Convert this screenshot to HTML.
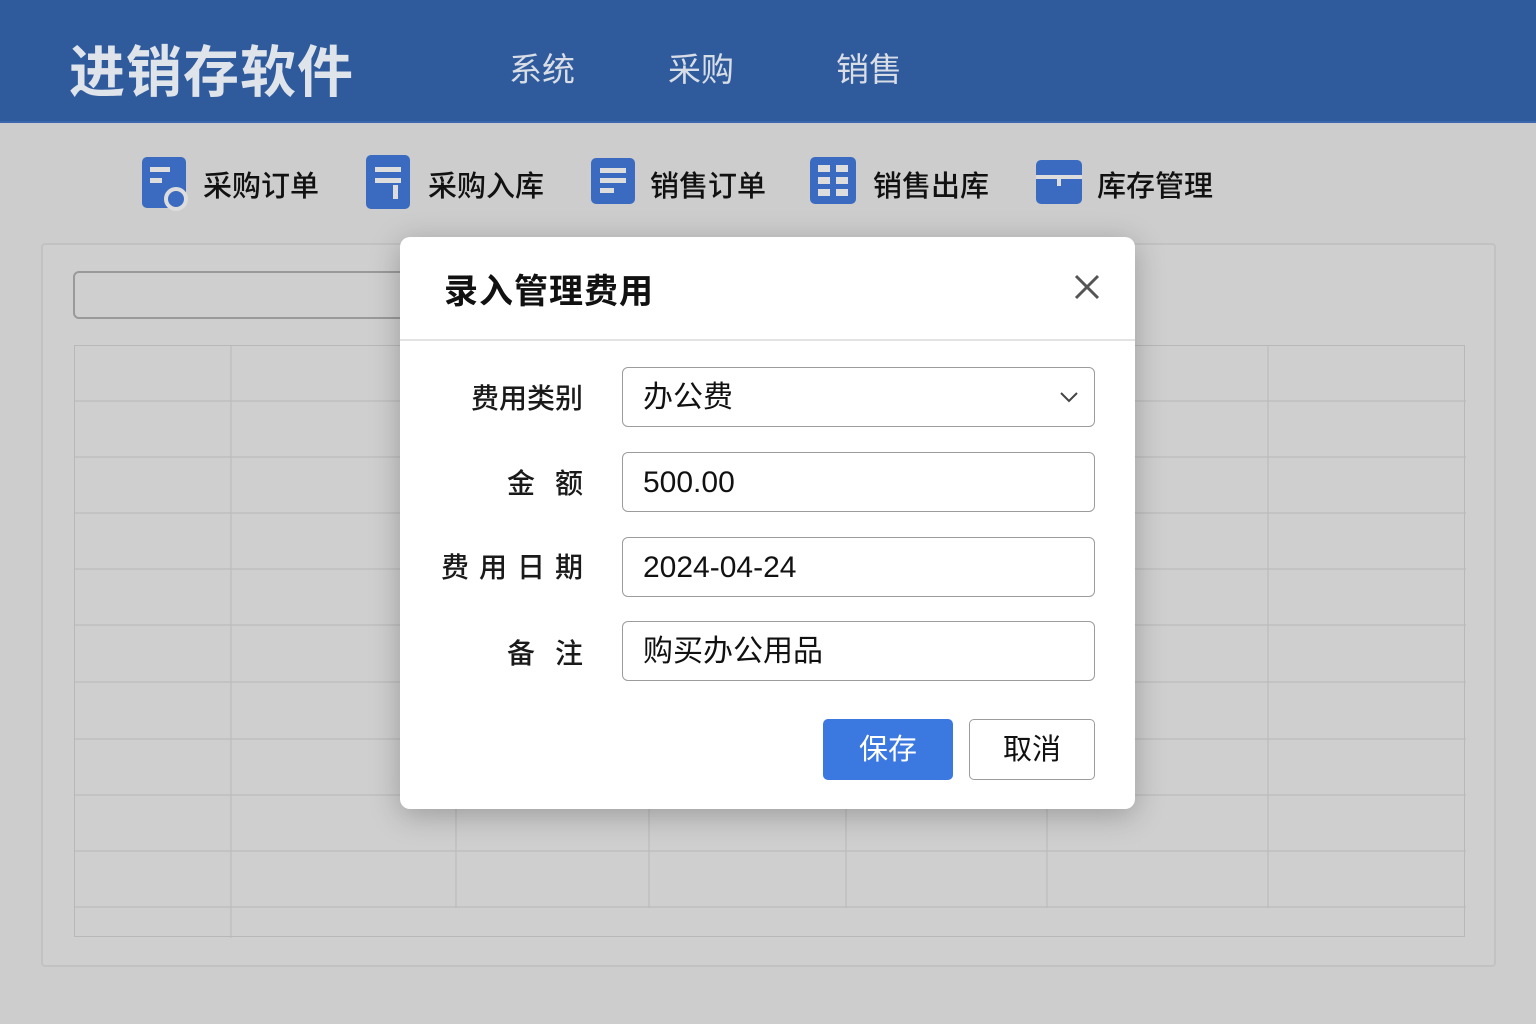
<!DOCTYPE html><html><head><meta charset="utf-8"><style>
*{margin:0;padding:0;box-sizing:border-box}
body{width:1536px;height:1024px;background:#cdcdcd;position:relative;overflow:hidden;font-family:"Liberation Sans","Noto Sans CJK SC",sans-serif}
.hd{position:absolute;left:0;top:0;width:1536px;height:123px;background:#2f5b9d;border-bottom:2px solid #3a67ad}
.ab{position:absolute;white-space:nowrap}
.logo{left:69px;top:28px;font-size:56px;font-weight:bold;color:#dfe3ea;letter-spacing:1px}
.nav{top:43px;font-size:33px;color:#d8dde6}
.tb{top:163px;font-size:29px;color:#111;font-weight:500}
.ic{position:absolute;top:157px;width:44px;height:51px;background:#3a6bc0;border-radius:5px}
.panel{position:absolute;left:41px;top:243px;width:1455px;height:724px;border:2px solid #c2c2c2;border-radius:4px;background:#cfcfcf}
.search{position:absolute;left:73px;top:271px;width:340px;height:48px;border:2px solid #9a9a9a;border-radius:6px}
.tbl{position:absolute;left:74px;top:345px;width:1391px;height:592px;border:1.5px solid #b8b8b8}
.dlg{position:absolute;left:400px;top:237px;width:735px;height:572px;background:#fff;border-radius:10px;box-shadow:0 6px 30px rgba(0,0,0,.25)}
.lbl{position:absolute;font-size:28px;color:#1a1a1a;text-align:right;right:552px;font-weight:500}
.inp{position:absolute;left:222px;width:473px;height:60px;border:1.5px solid #9c9c9c;border-radius:6px;font-size:30px;color:#111;padding-left:20px;line-height:59px}
</style></head><body>
<div class="hd"></div>
<div class="ab logo">进销存软件</div>
<div class="ab nav" style="left:509px">系统</div>
<div class="ab nav" style="left:668px">采购</div>
<div class="ab nav" style="left:836px">销售</div>

<div class="ic" style="left:142px"><div style="position:absolute;left:8px;top:10px;width:20px;height:5px;background:#ddd"></div><div style="position:absolute;left:8px;top:21px;width:12px;height:5px;background:#ddd"></div><div style="position:absolute;left:22px;top:30px;width:24px;height:24px;border-radius:50%;background:#3a6bc0;border:4px solid #ddd"></div></div>
<div class="ab tb" style="left:203px">采购订单</div>
<div class="ic" style="left:366px;top:155px;height:54px"><div style="position:absolute;left:9px;top:12px;width:26px;height:5px;background:#ddd"></div><div style="position:absolute;left:9px;top:23px;width:26px;height:5px;background:#ddd"></div><div style="position:absolute;left:27px;top:30px;width:5px;height:14px;background:#ddd"></div></div>
<div class="ab tb" style="left:428px">采购入库</div>
<div class="ic" style="left:591px;top:158px;height:46px"><div style="position:absolute;left:9px;top:10px;width:26px;height:5px;background:#ddd"></div><div style="position:absolute;left:9px;top:20px;width:26px;height:5px;background:#ddd"></div><div style="position:absolute;left:9px;top:30px;width:14px;height:5px;background:#ddd"></div></div>
<div class="ab tb" style="left:650px">销售订单</div>
<div class="ic" style="left:810px;top:157px;height:47px;width:46px"><div style="position:absolute;left:8px;top:8px;width:30px;height:31px;background:repeating-linear-gradient(90deg,#ddd 0 12px,transparent 12px 18px);-webkit-mask:repeating-linear-gradient(180deg,#000 0 7px,transparent 7px 12px)"></div></div>
<div class="ab tb" style="left:873px">销售出库</div>
<div class="ic" style="left:1036px;top:160px;height:44px;width:46px"><div style="position:absolute;left:0;top:15px;width:46px;height:4px;background:#ddd"></div><div style="position:absolute;left:21px;top:19px;width:4px;height:7px;background:#ddd"></div></div>
<div class="ab tb" style="left:1097px">库存管理</div>

<div class="panel"></div>
<div class="search"></div>
<svg class="tbl" style="overflow:visible" width="1391" height="592">
<g stroke="#bcbcbc" stroke-width="1.2">
<line x1="156" y1="0" x2="156" y2="592"/><line x1="381" y1="0" x2="381" y2="562"/><line x1="574" y1="0" x2="574" y2="562"/><line x1="771" y1="0" x2="771" y2="562"/><line x1="972" y1="0" x2="972" y2="562"/><line x1="1193" y1="0" x2="1193" y2="562"/>
<line x1="0" y1="55" x2="1391" y2="55"/><line x1="0" y1="111" x2="1391" y2="111"/><line x1="0" y1="167" x2="1391" y2="167"/><line x1="0" y1="223" x2="1391" y2="223"/><line x1="0" y1="279" x2="1391" y2="279"/><line x1="0" y1="336" x2="1391" y2="336"/><line x1="0" y1="393" x2="1391" y2="393"/><line x1="0" y1="449" x2="1391" y2="449"/><line x1="0" y1="505" x2="1391" y2="505"/><line x1="0" y1="561" x2="1391" y2="561"/>
</g></svg>

<div class="dlg">
<div class="ab" style="left:44px;top:27px;font-size:34px;font-weight:bold;color:#111;letter-spacing:1px">录入管理费用</div>
<svg class="ab" style="left:674px;top:37px" width="26" height="26"><path d="M2 2L24 24M24 2L2 24" stroke="#555" stroke-width="3"/></svg>
<div class="ab" style="left:0;top:102px;width:735px;height:1.5px;background:#e3e3e3"></div>
<div class="lbl" style="top:140px">费用类别</div>
<div class="lbl" style="top:225px;letter-spacing:20px;margin-right:-20px">金额</div>
<div class="lbl" style="top:309px;letter-spacing:10px;margin-right:-10px">费用日期</div>
<div class="lbl" style="top:395px;letter-spacing:20px;margin-right:-20px">备注</div>
<div class="inp" style="top:130px">办公费<svg style="position:absolute;right:16px;top:24px" width="18" height="11"><path d="M1 1L9 9L17 1" stroke="#444" stroke-width="2" fill="none"/></svg></div>
<div class="inp" style="top:215px">500.00</div>
<div class="inp" style="top:300px">2024-04-24</div>
<div class="inp" style="top:384px">购买办公用品</div>
<div class="ab" style="left:423px;top:482px;width:130px;height:61px;background:#3b78e0;border-radius:5px;color:#fff;font-size:29px;text-align:center;line-height:63px">保存</div>
<div class="ab" style="left:569px;top:482px;width:126px;height:61px;border:1.5px solid #9c9c9c;border-radius:5px;color:#111;font-size:29px;text-align:center;line-height:60px">取消</div>
</div>
</body></html>
